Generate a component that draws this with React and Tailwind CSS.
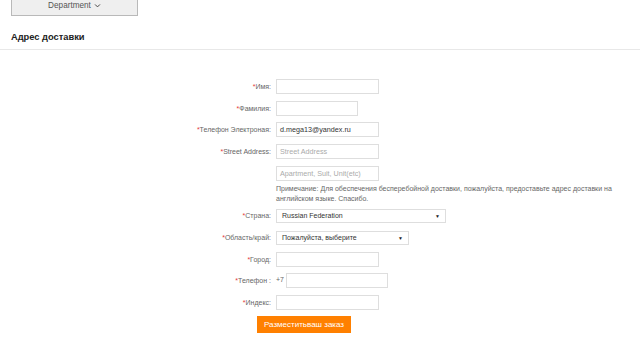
import React from "react";

// Labelled form row: label column is right aligned, field starts at x=276
const Row = ({ label, children, className = "" }) => (
  <div className={`flex items-center ${className}`}>
    <label className="w-[272px] pr-[1px] text-right text-[7px] leading-[15px] text-[#666]">
      <span className="text-[#e4393c]">*</span>
      {label}
    </label>
    <div className="ml-[4px] flex items-center">{children}</div>
  </div>
);

const Field = ({ width, value, placeholder }) => (
  <div
    className={`flex h-[15px] items-center whitespace-nowrap border border-[#dedede] bg-white px-[3px] text-[7.2px] leading-[13px] ${width} ${
      value ? "text-[#333]" : "text-[#aaa]"
    }`}
  >
    {value || placeholder || ""}
  </div>
);

const Select = ({ width, value }) => (
  <div
    className={`flex h-[14px] items-center justify-between border border-[#dedede] bg-white pl-[5px] pr-[5px] text-[7px] leading-[12px] text-[#333] ${width}`}
  >
    <span>{value}</span>
    <span className="text-[5px] text-[#222]">▼</span>
  </div>
);

const App = () => {
  return (
    <div className="min-h-[361px] w-full bg-white font-['Liberation_Sans',Arial,sans-serif]">
      {/* Department dropdown */}
      <div className="ml-[11px] flex h-[16px] w-[127px] items-start justify-center gap-[3px] border-x border-b border-[#b9b9b9] bg-[#efefef] pt-[1px] text-[8.2px] leading-[9px] text-[#555]">
        <span>Department</span>
        <svg width="7" height="7" viewBox="0 0 10 10" className="mt-[1px]">
          <path d="M1.5 3.5 L5 7 L8.5 3.5" fill="none" stroke="#444" strokeWidth="1.4" />
        </svg>
      </div>

      {/* Section title */}
      <div className="mt-[15px] border-b border-[#e8e8e8] pb-[6px] pl-[11px] text-[9.3px] font-bold leading-[12px] text-[#222]">
        Адрес доставки
      </div>

      {/* Shipping form */}
      <div className="mt-[29px] flex flex-col">
        <Row label="Имя:">
          <Field width="w-[103px]" />
        </Row>
        <Row label="Фамилия:" className="mt-[7px]">
          <Field width="w-[82px]" />
        </Row>
        <Row label="Телефон Электроная:" className="mt-[6px]">
          <Field width="w-[103px]" value="d.mega13@yandex.ru" />
        </Row>
        <Row label="Street Address:" className="mt-[7px]">
          <Field width="w-[103px]" placeholder="Street Address" />
        </Row>
        <div className="mt-[7px] ml-[276px]">
          <Field width="w-[103px]" placeholder="Apartment, Suit, Unit(etc)" />
          <p className="mt-[3px] w-[345px] text-[7px] leading-[10px] text-[#666]">
            Примечание: Для обеспечения бесперебойной доставки, пожалуйста, предоставьте адрес доставки на английском языке. Спасибо.
          </p>
        </div>
        <Row label="Страна:" className="mt-[4px]">
          <Select width="w-[170px]" value="Russian Federation" />
        </Row>
        <Row label="Область/край:" className="mt-[7px]">
          <Select width="w-[133px]" value="Пожалуйста, выберите" />
        </Row>
        <Row label="Город:" className="mt-[7px]">
          <Field width="w-[103px]" />
        </Row>
        <Row label="Телефон :" className="mt-[6px]">
          <span className="mr-[2px] text-[7px] text-[#666]">+7</span>
          <Field width="w-[102px]" />
        </Row>
        <Row label="Индекс:" className="mt-[7px]">
          <Field width="w-[103px]" />
        </Row>
        <div className="mt-[6px] ml-[257px] flex">
          <button className="h-[17px] w-[94px] whitespace-nowrap bg-[#ff8000] text-[8px] leading-[17px] text-white">
            Разместитьваш заказ
          </button>
        </div>
      </div>
    </div>
  );
};

export default App;
